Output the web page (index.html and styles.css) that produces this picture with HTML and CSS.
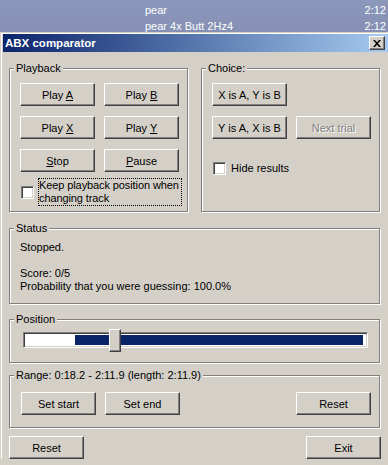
FILE: index.html
```html
<!DOCTYPE html>
<html lang="en">
    <head>
        <meta charset="UTF-8">
        <title>ABX comparator</title>
        <link rel="stylesheet" href="styles.css">
    </head>
    <body>
        <div class="lista">
            <div class="fila"><span>pear</span><span class="tiempo">2:12</span></div>
            <div class="fila"><span>pear 4x Butt 2Hz4</span><span class="tiempo">2:12</span></div>
        </div>
        <div class="ventana">
            <div class="titulo">
                <span>ABX comparator</span>
                <button class="cerrar" type="button">
                    <svg width="8" height="7" viewBox="0 0 8 7">
                        <path d="M0 0h2l2 2.2 2-2.2h2l-3 3.5 3 3.5h-2l-2-2.2-2 2.2h-2l3-3.5z" fill="#000"/>
                    </svg>
                </button>
            </div>
            <main class="contenido">
                <div class="fila-grupos">
                    <section class="grupo playback">
                        <span class="leyenda">Playback</span>
                        <div class="botones">
                            <button class="boton">Play <u>A</u></button>
                            <button class="boton">Play <u>B</u></button>
                            <button class="boton">Play <u>X</u></button>
                            <button class="boton">Play <u>Y</u></button>
                            <button class="boton"><u>S</u>top</button>
                            <button class="boton"><u>P</u>ause</button>
                        </div>
                        <label class="casilla mantener">
                            <span class="caja"></span>
                            <span class="foco">Keep playback position when<br>changing track</span>
                        </label>
                    </section>
                    <section class="grupo choice">
                        <span class="leyenda">Choice:</span>
                        <div class="botones">
                            <button class="boton">X is A, Y is B</button>
                            <span></span>
                            <button class="boton">Y is A, X is B</button>
                            <button class="boton desactivado" disabled>Next trial</button>
                        </div>
                        <label class="casilla ocultar">
                            <span class="caja"></span>
                            <span>Hide results</span>
                        </label>
                    </section>
                </div>
                <section class="grupo status">
                    <span class="leyenda">Status</span>
                    <p class="estado">Stopped.<br><br>Score: 0/5<br>Probability that you were guessing: 100.0%</p>
                </section>
                <section class="grupo position">
                    <span class="leyenda">Position</span>
                    <div class="pista">
                        <div class="seleccion"></div>
                        <div class="pulgar"></div>
                    </div>
                </section>
                <section class="grupo range">
                    <span class="leyenda">Range: 0:18.2 - 2:11.9 (length: 2:11.9)</span>
                    <div class="rango-botones">
                        <button class="boton">Set start</button>
                        <button class="boton">Set end</button>
                        <button class="boton derecha">Reset</button>
                    </div>
                </section>
                <div class="pie">
                    <button class="boton">Reset</button>
                    <button class="boton">Exit</button>
                </div>
            </main>
        </div>
    </body>
</html>
```

FILE: styles.css
```css
* {
    box-sizing: border-box;
}
body {
    margin: 0;
    background: #d4d0c8;
    font-family: "Liberation Sans", Arial, sans-serif;
    font-size: 11px;
    color: #000;
    overflow: hidden;
}
.lista {
    height: 32px;
    padding-top: 2px;
    background: linear-gradient(#8c98bb, #8590b4);
    color: #fff;
}
.fila {
    display: flex;
    line-height: 16px;
    padding-left: 145px;
    padding-right: 2px;
}
.tiempo {
    margin-left: auto;
}
.ventana {
    border-top: 1px solid #d4d0c8;
    border-left: 1px solid #d4d0c8;
    box-shadow: inset 1px 1px #fff;
    padding: 1px 0 0 2px;
}
.titulo {
    display: flex;
    align-items: center;
    height: 18px;
    padding-left: 2px;
    background: linear-gradient(to right, #0a246a, #a6caf0);
    color: #fff;
    font-weight: bold;
    font-size: 11.5px;
}
.cerrar {
    margin-left: auto;
    margin-right: 3px;
    width: 16px;
    height: 14px;
    padding: 0;
    display: flex;
    align-items: center;
    justify-content: center;
    background: #d4d0c8;
    border: 1px solid;
    border-color: #fff #404040 #404040 #fff;
    box-shadow: inset -1px -1px #808080;
}
.contenido {
    padding: 16px 0 0 6px;
}
.fila-grupos {
    display: flex;
    gap: 13px;
}
.grupo {
    border: 1px solid #808080;
    box-shadow: 1px 1px #fff, inset 1px 1px #fff;
    width: 371px;
}
.leyenda {
    display: block;
    width: fit-content;
    margin: -7px 0 0 4px;
    padding: 0 2px;
    line-height: 13px;
    background: #d4d0c8;
}
.boton {
    width: 75px;
    height: 23px;
    padding: 0;
    background: #d4d0c8;
    border: 1px solid;
    border-color: #fff #404040 #404040 #fff;
    box-shadow: inset -1px -1px #808080;
    font-family: inherit;
    font-size: 11px;
    color: #000;
}
.desactivado {
    color: #808080;
    text-shadow: 1px 1px #fff;
}
.playback, .choice {
    width: 179px;
    height: 144px;
}
.botones {
    display: grid;
    grid-template-columns: 75px 75px;
    column-gap: 9px;
    row-gap: 10px;
    margin: 8px 0 0 10px;
}
.casilla {
    display: flex;
    align-items: center;
}
.caja {
    flex: none;
    width: 13px;
    height: 13px;
    background: #fff;
    border: 1px solid;
    border-color: #808080 #fff #fff #808080;
    box-shadow: inset 1px 1px #404040, inset -1px -1px #d4d0c8;
}
.mantener {
    margin: 6px 0 0 11px;
}
.foco {
    flex: none;
    width: 144px;
    height: 28px;
    margin-left: 4px;
    border: 1px dotted #000;
    line-height: 13px;
    white-space: nowrap;
    letter-spacing: -0.1px;
}
.ocultar {
    margin: 23px 0 0 11px;
    gap: 5px;
    line-height: 13px;
}
.status {
    height: 76px;
    margin-top: 16px;
}
.estado {
    margin: 6px 0 0 10px;
    line-height: 13px;
}
.position {
    height: 44px;
    margin-top: 15px;
}
.pista {
    position: relative;
    width: 345px;
    height: 16px;
    margin: 6px 0 0 13px;
    padding: 2px 4px 0 51px;
    background: #fff;
    border: 1px solid;
    border-color: #808080 #fff #fff #808080;
    box-shadow: inset 1px 1px #404040, inset -1px -1px #d4d0c8;
}
.seleccion {
    height: 10px;
    background: #0a246a;
}
.pulgar {
    position: absolute;
    left: 85px;
    top: -4px;
    width: 12px;
    height: 23px;
    background: #d4d0c8;
    border: 1px solid;
    border-color: #fff #404040 #404040 #fff;
    box-shadow: inset -1px -1px #808080;
}
.range {
    height: 53px;
    margin-top: 12px;
}
.rango-botones {
    display: flex;
    gap: 9px;
    margin-top: 10px;
    padding: 0 8px 0 11px;
}
.derecha {
    margin-left: auto;
}
.pie {
    display: flex;
    justify-content: space-between;
    width: 372px;
    margin-top: 8px;
}
```
